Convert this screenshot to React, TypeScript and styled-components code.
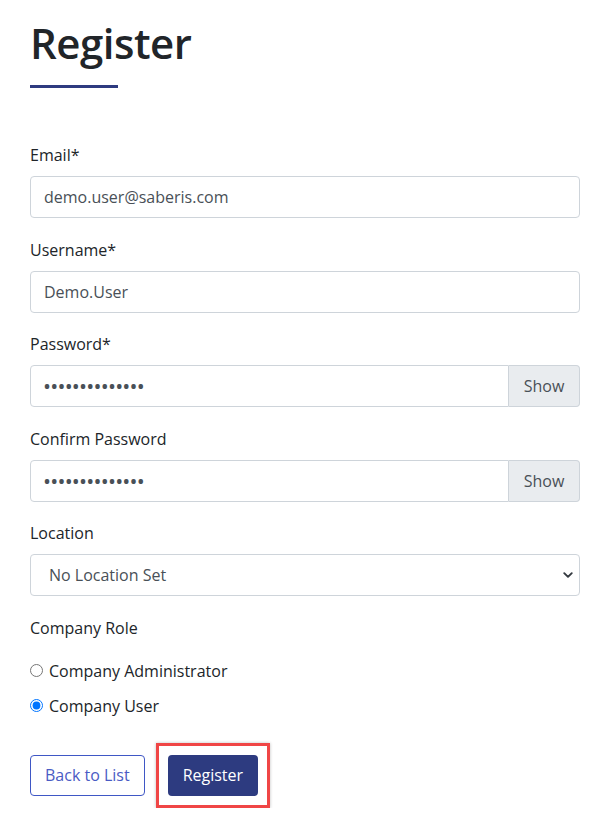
import React from "react";
import styled, { createGlobalStyle } from "styled-components";

const Global = createGlobalStyle`
  html, body { margin: 0; padding: 0; background: #fff; }
  body { font-family: "Segoe UI", "Open Sans", "Noto Sans", sans-serif; color: #212529; }
  * { box-sizing: border-box; }
`;

const Page = styled.div`
  width: 610px;
  padding: 14px 30px 0 30px;
`;

const Title = styled.h1`
  margin: 0;
  font-size: 42px;
  font-weight: 600;
  line-height: 58px;
  color: #212529;
  letter-spacing: -0.5px;
`;

const Rule = styled.div`
  width: 88px;
  height: 3px;
  background: #2e3b80;
  margin-top: 13px;
  margin-bottom: 55px;
`;

const Form = styled.form`
  display: flex;
  flex-direction: column;
`;

const Group = styled.div`
  display: flex;
  flex-direction: column;
  margin-bottom: 19.5px;
`;

const Label = styled.label`
  font-size: 16px;
  line-height: 24px;
  margin-bottom: 9px;
  color: #212529;
`;

const InputRow = styled.div`
  display: flex;
  height: 42px;
`;

const Input = styled.input<{ $joined?: boolean }>`
  flex: 1 1 auto;
  min-width: 0;
  width: 100%;
  height: 42px;
  border: 1px solid #ced4da;
  border-radius: ${(p) => (p.$joined ? "4px 0 0 4px" : "4px")};
  padding: 0 13px;
  font-family: inherit;
  font-size: 16px;
  color: #495057;
  background: #fff;
  outline: none;
  &[type="password"] { letter-spacing: 1.2px; font-size: 16px; font-weight: 700; }
`;

const Addon = styled.button`
  flex: 0 0 71px;
  height: 42px;
  border: 1px solid #ced4da;
  border-left: none;
  border-radius: 0 4px 4px 0;
  background: #e9ecef;
  color: #495057;
  font-family: inherit;
  font-size: 16px;
  padding: 0;
`;

const SelectBox = styled.div`
  height: 42px;
  border: 1px solid #ced4da;
  border-radius: 4px;
  display: flex;
  align-items: center;
  padding: 0 6px 0 18px;
  font-size: 16px;
  color: #495057;
  justify-content: space-between;
`;

const RoleLabel = styled(Label)`
  margin-bottom: 19px;
`;

const RadioRow = styled.label`
  display: flex;
  align-items: center;
  gap: 6px;
  font-size: 16px;
  line-height: 24px;
  height: 24px;
  margin-bottom: 11px;
  color: #212529;
`;

const Radio = styled.input`
  margin: 0;
  width: 13px;
  height: 13px;
  accent-color: #0075ff;
`;

const Actions = styled.div`
  display: flex;
  align-items: center;
  gap: 11px;
  margin-top: 14px;
`;

const OutlineButton = styled.button`
  height: 41px;
  padding: 0 14px;
  border: 1px solid #3f57c5;
  border-radius: 4px;
  background: #fff;
  color: #4a5bc4;
  font-family: inherit;
  font-size: 16px;
`;

const Highlight = styled.div`
  border: 3px solid #f04646;
  padding: 9px 9px;
  box-shadow: 0 0 3px rgba(0,0,0,0.25);
`;

const PrimaryButton = styled.button`
  height: 41px;
  padding: 0 15px;
  border: none;
  border-radius: 4px;
  background: #2d3b80;
  color: #fff;
  font-family: inherit;
  font-size: 16px;
`;

export default function App() {
  return (
    <>
      <Global />
      <Page>
        <Title>Register</Title>
        <Rule />
        <Form onSubmit={(e) => e.preventDefault()}>
          <Group>
            <Label>Email*</Label>
            <Input defaultValue="demo.user@saberis.com" />
          </Group>
          <Group>
            <Label>Username*</Label>
            <Input defaultValue="Demo.User" />
          </Group>
          <Group>
            <Label>Password*</Label>
            <InputRow>
              <Input $joined type="password" defaultValue="Password1234!!" />
              <Addon type="button">Show</Addon>
            </InputRow>
          </Group>
          <Group>
            <Label>Confirm Password</Label>
            <InputRow>
              <Input $joined type="password" defaultValue="Password1234!!" />
              <Addon type="button">Show</Addon>
            </InputRow>
          </Group>
          <Group>
            <Label>Location</Label>
            <SelectBox>
              <span>No Location Set</span>
              <svg width="10" height="10" viewBox="0 0 16 16">
                <path d="M2 5l6 6 6-6" fill="none" stroke="#343a40" strokeWidth="3" strokeLinecap="round" strokeLinejoin="round" />
              </svg>
            </SelectBox>
          </Group>
          <RoleLabel>Company Role</RoleLabel>
          <RadioRow>
            <Radio type="radio" name="role" />
            Company Administrator
          </RadioRow>
          <RadioRow>
            <Radio type="radio" name="role" defaultChecked />
            Company User
          </RadioRow>
          <Actions>
            <OutlineButton type="button">Back to List</OutlineButton>
            <Highlight>
              <PrimaryButton type="submit">Register</PrimaryButton>
            </Highlight>
          </Actions>
        </Form>
      </Page>
    </>
  );
}
